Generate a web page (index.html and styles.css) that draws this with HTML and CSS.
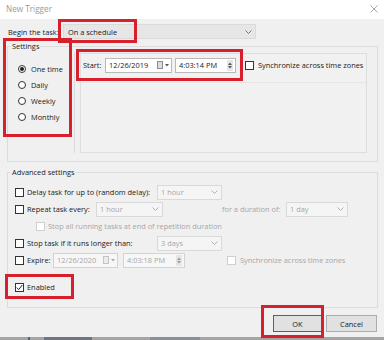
FILE: index.html
```html
<!DOCTYPE html>
<html>
<head>
<meta charset="utf-8">
<link rel="stylesheet" href="styles.css">
</head>
<body>
<div class="window">
  <div class="titlebar">
    <span class="title">New Trigger</span>
    <svg class="close" width="8" height="8" viewBox="0 0 8 8"><path d="M0.5 0.5 L7.5 7.5 M7.5 0.5 L0.5 7.5" stroke="#a8a8a8" stroke-width="1"/></svg>
  </div>
  <div class="content">
    <div class="begin-row">
      <span class="begin-label">Begin the task:</span>
      <div class="combo combo-main"><span>On a schedule</span><svg class="chev" width="7" height="4" viewBox="0 0 7 4"><polyline points="0.5,0.5 3.5,3.5 6.5,0.5" fill="none" stroke="#777" stroke-width="1"/></svg></div>
    </div>

    <div class="group settings">
      <div class="group-title">Settings</div>
      <div class="settings-body">
        <div class="radios">
          <div class="radio-row"><span class="radio checked"></span><span>One time</span></div>
          <div class="radio-row"><span class="radio"></span><span>Daily</span></div>
          <div class="radio-row"><span class="radio"></span><span>Weekly</span></div>
          <div class="radio-row"><span class="radio"></span><span>Monthly</span></div>
        </div>
        <div class="vsep"></div>
        <div class="panel">
          <div class="start-row">
            <span class="start-label">Start:</span>
            <div class="field date"><span>12/26/2019</span><span class="cal"><span class="cal-box"></span><svg width="4" height="3" viewBox="0 0 4 3"><polygon points="0,0 4,0 2,2.5" fill="#555"/></svg></span></div>
            <div class="field time"><span>4:03:14 PM</span><span class="spin"><svg width="4" height="3" viewBox="0 0 4 3"><polygon points="0,3 4,3 2,0.5" fill="#555"/></svg><svg width="4" height="3" viewBox="0 0 4 3"><polygon points="0,0 4,0 2,2.5" fill="#555"/></svg></span></div>
            <span class="cb sync-cb"></span>
            <span class="sync-text">Synchronize across time zones</span>
          </div>
        </div>
      </div>
    </div>

    <div class="group advanced">
      <div class="group-title">Advanced settings</div>
      <div class="adv-rows">
        <div class="adv-row">
          <span class="cb"></span>
          <span class="lbl w130">Delay task for up to (random delay):</span>
          <div class="combo dis w65"><span>1 hour</span><svg class="chev" width="7" height="4" viewBox="0 0 7 4"><polyline points="0.5,0.5 3.5,3.5 6.5,0.5" fill="none" stroke="#b0b0b0" stroke-width="1"/></svg></div>
        </div>
        <div class="adv-row">
          <span class="cb"></span>
          <span class="lbl w69">Repeat task every:</span>
          <div class="combo dis w67"><span>1 hour</span><svg class="chev" width="7" height="4" viewBox="0 0 7 4"><polyline points="0.5,0.5 3.5,3.5 6.5,0.5" fill="none" stroke="#b0b0b0" stroke-width="1"/></svg></div>
          <span class="lbl gray dur">for a duration of:</span>
          <div class="combo dis w62"><span>1 day</span><svg class="chev" width="7" height="4" viewBox="0 0 7 4"><polyline points="0.5,0.5 3.5,3.5 6.5,0.5" fill="none" stroke="#b0b0b0" stroke-width="1"/></svg></div>
        </div>
        <div class="adv-row sub">
          <span class="cb dis-cb"></span>
          <span class="lbl gray">Stop all running tasks at end of repetition duration</span>
        </div>
        <div class="adv-row">
          <span class="cb"></span>
          <span class="lbl w130">Stop task if it runs longer than:</span>
          <div class="combo dis w65"><span>3 days</span><svg class="chev" width="7" height="4" viewBox="0 0 7 4"><polyline points="0.5,0.5 3.5,3.5 6.5,0.5" fill="none" stroke="#b0b0b0" stroke-width="1"/></svg></div>
        </div>
        <div class="adv-row">
          <span class="cb"></span>
          <span class="lbl w26">Expire:</span>
          <div class="field dis-field w65"><span>12/26/2020</span><span class="cal"><span class="cal-box dis-cal"></span><svg width="4" height="3" viewBox="0 0 4 3"><polygon points="0,0 4,0 2,2.5" fill="#aaa"/></svg></span></div>
          <div class="field dis-field w62 exp-time"><span>4:03:18 PM</span><span class="spin"><svg width="4" height="3" viewBox="0 0 4 3"><polygon points="0,3 4,3 2,0.5" fill="#999"/></svg><svg width="4" height="3" viewBox="0 0 4 3"><polygon points="0,0 4,0 2,2.5" fill="#999"/></svg></span></div>
          <span class="cb dis-cb exp-cb"></span>
          <span class="lbl gray">Synchronize across time zones</span>
        </div>
      </div>
      <div class="enabled-row">
        <span class="cb checked"><svg width="7" height="7" viewBox="0 0 7 7"><polyline points="0.8,3.6 2.7,5.6 6.3,1" fill="none" stroke="#222" stroke-width="1"/></svg></span>
        <span class="lbl">Enabled</span>
      </div>
    </div>

    <div class="buttons">
      <div class="btn ok">OK</div>
      <div class="btn cancel">Cancel</div>
    </div>
  </div>
  <div class="taskbar"><span class="tb-seg s1"></span><span class="tb-seg s2"></span><span class="tb-seg s3"></span></div>

  <div class="mark m-begin"></div>
  <div class="mark m-settings"></div>
  <div class="mark m-start"></div>
  <div class="mark m-enabled"></div>
  <div class="mark m-ok"></div>
</div>
</body>
</html>
```

FILE: styles.css
```css
* { box-sizing: border-box; }
html, body { margin: 0; padding: 0; }
body {
  background: #f0f0f0;
  font-family: "Open Sans", "Noto Sans", sans-serif;
  font-size: 7.4px;
  color: #1a1a1a;
}
.window {
  position: relative;
  width: 384px;
  height: 340px;
  overflow: hidden;
  background: #f0f0f0;
}
.titlebar {
  height: 19px;
  background: #ffffff;
  display: flex;
  align-items: center;
  justify-content: space-between;
  padding: 0 6px 2px 6px;
}
.title { color: #9b9b9b; font-size: 8.2px; }
.close { display: block; }

.content { padding: 0 6px 0 7px; }

.begin-row {
  margin-top: 5px;
  height: 15px;
  display: flex;
  align-items: center;
  padding-left: 1px;
}
.begin-label { width: 55px; white-space: nowrap; }

.combo {
  height: 15px;
  display: flex;
  align-items: center;
  justify-content: space-between;
  padding: 0 3px 0 3px;
  border: 1px solid #d4d4d4;
}
.combo-main { width: 193px; background: #e6e6e6; border-color: #dadada; padding-left: 4px; }
.combo.dis { background: #f5f5f5; color: #a6a6a6; border-color: #d9d9d9; }
.chev { display: block; }

.group {
  border: 1px solid #dcdcdc;
  display: flex;
  flex-direction: column;
}
.group-title {
  align-self: flex-start;
  margin: -6px 0 0 3px;
  padding: 0 1px;
  line-height: 11px;
  background: #f0f0f0;
}
.settings { margin-top: 7px; padding-bottom: 8px; }
.settings-body { margin-top: 1px; height: 100px; display: flex; }
.radios { width: 66px; padding: 8px 0 0 10px; }
.radio-row { height: 16px; display: flex; align-items: center; gap: 5px; }
.radio {
  width: 8px; height: 8px;
  border: 1px solid #333;
  border-radius: 50%;
  background: #fff;
  display: flex; align-items: center; justify-content: center;
}
.radio.checked::after {
  content: "";
  width: 4px; height: 4px;
  border-radius: 50%;
  background: #1e1e1e;
}
.vsep { width: 1px; background: #dadada; margin-right: 5px; }
.panel {
  width: 287px;
  border: 1px solid #dedede;
  background: #f1f1f1;
}
.start-row {
  display: flex;
  align-items: center;
  padding: 4px 0 10px 2px;
  border-bottom: 1px solid #e6e6e6;
  height: 29px;
  white-space: nowrap;
}
.start-label { width: 22px; }
.field {
  height: 15px;
  display: flex;
  align-items: center;
  justify-content: space-between;
  background: #fff;
  border: 1px solid #b9b9b9;
  padding: 0 2px 0 3px;
  white-space: nowrap;
}
.date { width: 67px; margin-right: 3px; }
.time { width: 61px; margin-right: 9px; }
.cal { display: flex; align-items: center; gap: 2px; }
.cal-box { width: 6px; height: 8px; border: 1px solid #8c8c8c; background: #dcdcdc; }
.dis-cal { border-color: #c4c4c4; background: #ececec; }
.spin {
  display: flex; flex-direction: column; align-items: center; justify-content: center; gap: 1px;
  width: 6px; height: 11px; background: #e6e6e6;
}
.spin svg { display: block; }
.cal svg { display: block; }
.cb {
  width: 9px; height: 9px;
  border: 1px solid #333;
  background: #fff;
  flex: none;
  display: flex; align-items: center; justify-content: center;
}
.cb.dis-cb { border-color: #cfcfcf; }
.sync-cb { margin-right: 4px; }

.advanced { margin-top: 10px; padding-bottom: 12px; }
.adv-rows { margin-top: 6px; display: flex; flex-direction: column; gap: 1px; }
.adv-row { height: 16px; display: flex; align-items: center; padding-left: 7px; }
.adv-row .cb { margin-right: 3px; }
.adv-row.sub { padding-left: 28px; }
.lbl { white-space: nowrap; }
.gray { color: #a6a6a6; }
.w130 { width: 130px; }
.w69 { width: 69px; }
.w26 { width: 26px; }
.w65 { width: 65px; }
.w67 { width: 67px; }
.w62 { width: 62px; }
.dur { margin-left: 59px; width: 64px; }
.dis-field { background: #f7f7f7; border-color: #d3d3d3; color: #a6a6a6; }
.exp-time { margin-left: 5px; margin-right: 42px; }
.adv-row .exp-cb { margin-right: 4px; }
.enabled-row { margin-top: 11px; height: 16px; display: flex; align-items: center; gap: 3px; padding-left: 7px; }
.cb.checked svg { display: block; }

.buttons {
  margin-top: 7px;
  display: flex;
  justify-content: flex-end;
  gap: 4px;
  padding-right: 1px;
}
.btn {
  height: 17px;
  display: flex; align-items: center; justify-content: center;
  background: #e1e1e1;
  border: 1px solid #adadad;
}
.ok { width: 49px; border-color: #0078d7; }
.cancel { width: 51px; }

.taskbar {
  position: absolute; left: 0; right: 0; bottom: 0; height: 3px;
  background: #a4a4a4;
}
.tb-seg { position: absolute; top: 0; height: 3px; background: #5a6470; }
.s1 { left: 28px; width: 2px; }
.s2 { left: 44px; width: 48px; background: #6d7680; }
.s3 { left: 150px; width: 50px; background: #8c9096; }

.mark {
  position: absolute;
  border: 3px solid #d8202c;
  pointer-events: none;
}
.m-begin { left: 58px; top: 19px; width: 79px; height: 24px; }
.m-settings { left: 3px; top: 38px; width: 69px; height: 99px; }
.m-start { left: 76px; top: 49px; width: 167px; height: 32px; }
.m-enabled { left: 5px; top: 274px; width: 69px; height: 25px; }
.m-ok { left: 261px; top: 305px; width: 63px; height: 33px; }
```
